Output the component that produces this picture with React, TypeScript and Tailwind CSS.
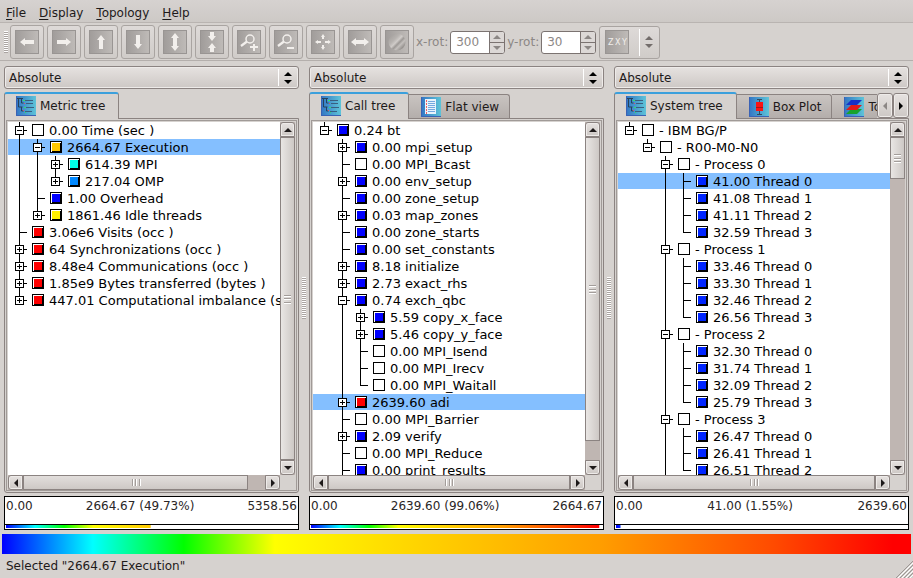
import type { ReactNode } from "react"

type Guide = "line" | "none" | "plus" | "minus" | "branch"

interface TreeNode {
  label: string
  color?: string
  closed?: boolean
  selected?: boolean
  // more siblings follow below the visible part of the list
  continues?: boolean
  children?: TreeNode[]
}

interface PanelProps {
  id: string
  name: string
  tabs: ReactNode
  tree: TreeNode[]
  hThumb: ReactNode
  vThumb: ReactNode
  min: string
  value: string
  max: string
  percent: number
}

const BLUE = "#0000ff"
const THREAD = "#0025ff"
const RED = "#ff0000"

const metricTree: TreeNode[] = [
  {
    label: "0.00 Time (sec )",
    children: [
      {
        label: "2664.67 Execution",
        color: "#ffc800",
        selected: true,
        children: [
          { label: "614.39 MPI", color: "#00ffe6", closed: true },
          { label: "217.04 OMP", color: "#0088ff", closed: true },
        ],
      },
      { label: "1.00 Overhead", color: BLUE },
      { label: "1861.46 Idle threads", color: "#fff000", closed: true },
    ],
  },
  { label: "3.06e6 Visits (occ )", color: RED },
  { label: "64 Synchronizations (occ )", color: RED, closed: true },
  { label: "8.48e4 Communications (occ )", color: RED, closed: true },
  { label: "1.85e9 Bytes transferred (bytes )", color: RED, closed: true },
  { label: "447.01 Computational imbalance (sec )", color: RED, closed: true },
]

const callTree: TreeNode[] = [
  {
    label: "0.24 bt",
    color: BLUE,
    children: [
      { label: "0.00 mpi_setup", color: BLUE, closed: true },
      { label: "0.00 MPI_Bcast" },
      { label: "0.00 env_setup", color: BLUE, closed: true },
      { label: "0.00 zone_setup", color: BLUE },
      { label: "0.03 map_zones", color: BLUE, closed: true },
      { label: "0.00 zone_starts", color: BLUE },
      { label: "0.00 set_constants", color: BLUE },
      { label: "8.18 initialize", color: BLUE, closed: true },
      { label: "2.73 exact_rhs", color: BLUE, closed: true },
      {
        label: "0.74 exch_qbc",
        color: BLUE,
        children: [
          { label: "5.59 copy_x_face", color: BLUE, closed: true },
          { label: "5.46 copy_y_face", color: BLUE, closed: true },
          { label: "0.00 MPI_Isend" },
          { label: "0.00 MPI_Irecv" },
          { label: "0.00 MPI_Waitall" },
        ],
      },
      { label: "2639.60 adi", color: RED, closed: true, selected: true },
      { label: "0.00 MPI_Barrier" },
      { label: "2.09 verify", color: BLUE, closed: true },
      { label: "0.00 MPI_Reduce" },
      { label: "0.00 print_results", color: BLUE, continues: true },
    ],
  },
]

const threads = (values: string[], selected = -1): TreeNode[] =>
  values.map((v, i) => ({ label: `${v} Thread ${i}`, color: THREAD, selected: i === selected }))

const systemTree: TreeNode[] = [
  {
    label: "- IBM BG/P",
    children: [
      {
        label: "- R00-M0-N0",
        children: [
          { label: "- Process 0", children: threads(["41.00", "41.08", "41.11", "32.59"], 0) },
          { label: "- Process 1", children: threads(["33.46", "33.30", "32.46", "26.56"]) },
          { label: "- Process 2", children: threads(["32.30", "31.74", "32.09", "25.79"]) },
          { label: "- Process 3", continues: true, children: threads(["26.47", "26.41", "26.51"]) },
        ],
      },
    ],
  },
]

const raised = "border border-[#8b8381] bg-linear-to-b from-[#e6e2e0] to-[#cdc8c5] shadow-[inset_0_0_0_1px_#eeebe9]"
const spectrum =
  "bg-[linear-gradient(to_right,#00f,#0ff_10%,#0f0_20%,#ff0_30%,#ffc800_50%,#ff9d00_66%,#ff4a00_85%,#f00_98%)]"

function GuideCell({ kind, down }: { kind: Guide; down: boolean }) {
  const box = kind === "plus" || kind === "minus"
  return (
    <svg width="18" height="17" className="shrink-0" shapeRendering="crispEdges">
      {kind !== "none" && <rect x="9" y="0" width="1" height={down ? 17 : 9} />}
      {(kind === "branch" || box) && <rect x="9" y="8" width="8" height="1" />}
      {box && (
        <>
          <rect x="5" y="4" width="9" height="9" />
          <rect x="6" y="5" width="7" height="7" fill="#fff" />
          <rect x="7" y="8" width="5" height="1" />
        </>
      )}
      {kind === "plus" && <rect x="9" y="6" width="1" height="5" />}
    </svg>
  )
}

function Swatch({ color }: { color?: string }) {
  return (
    <svg width="12" height="12" className="mx-1 mt-[2px] shrink-0" shapeRendering="crispEdges">
      <rect width="12" height="12" />
      <rect x="1" y="1" width="10" height="10" fill="#fff" />
      {color && (
        <>
          <path d="M10 2h1v9H2v-1h8z" />
          <rect x="2" y="2" width="8" height="8" fill={color} />
        </>
      )}
    </svg>
  )
}

function TreeRows({ nodes, trail = [] }: { nodes: TreeNode[]; trail?: boolean[] }) {
  return (
    <ul role={trail.length ? "group" : "tree"}>
      {nodes.map((node, i) => {
        const more = i < nodes.length - 1 || !!node.continues
        const kind: Guide = node.children ? "minus" : node.closed ? "plus" : "branch"
        return (
          <li key={node.label} role="treeitem" aria-selected={!!node.selected}>
            <div
              className={`flex h-[17px] border-b border-transparent bg-clip-padding pl-[2px] ${
                node.selected ? "bg-[#84bfff]" : ""
              }`}
            >
              {trail.map((line, t) => (
                <GuideCell key={t} kind={line ? "line" : "none"} down />
              ))}
              <GuideCell kind={kind} down={more} />
              <Swatch color={node.color} />
              <span className="pl-px text-[13px] leading-[18px] whitespace-pre text-black">{node.label}</span>
            </div>
            {node.children && <TreeRows nodes={node.children} trail={[...trail, more]} />}
          </li>
        )
      })}
    </ul>
  )
}

function Arrow({ dir }: { dir: "up" | "down" | "left" | "right" }) {
  const paths = {
    up: "M4 2 8 6H0z",
    down: "M0 2h8L4 6z",
    left: "M6 0v8L2 4z",
    right: "M2 0v8l4-4z",
  }
  return (
    <svg width="8" height="8" viewBox="0 0 8 8" fill="currentColor" className="shrink-0">
      <path d={paths[dir]} />
    </svg>
  )
}

function TreeIcon() {
  return (
    <svg width="20" height="20" viewBox="0 0 20 20" className="shrink-0">
      <defs>
        <linearGradient id="tabBlue" x1="0" x2="1">
          <stop offset="0" stopColor="#3275c4" />
          <stop offset="1" stopColor="#5ec4d8" />
        </linearGradient>
      </defs>
      <rect width="20" height="20" fill="url(#tabBlue)" />
      <path d="M.5 0v19.5H20" fill="none" stroke="#3b62b4" />
      <path d="M1 2.5h6M2.500 3v8h4M5.500 3v4h2M5.500 11v4h2" fill="none" stroke="#27425c" />
      <path d="M9 4.500h8M10 7.500h7M9 11.500h9M9 15.500h7" fill="none" stroke="#3a5f80" />
      <path d="M7 4h2v1H7zM8 11h2v1H8zM9 16h1v1H9z" fill="#2fe070" />
      <path d="M8 7h1v1H8zM7 14h1v1H7z" fill="#e04c64" />
    </svg>
  )
}

function FlatIcon() {
  return (
    <svg width="20" height="20" viewBox="0 0 20 20" className="shrink-0">
      <rect width="20" height="20" fill="url(#tabBlue)" />
      <path d="M.5 0v19.5H20" fill="none" stroke="#3b62b4" />
      <rect x="4" y="2" width="11" height="15" fill="#e8f3fc" />
      <path d="M7 4.500h7M7 6.500h7M7 8.500h7M7 10.500h7M7 12.500h7M7 14.500h7" stroke="#75a8df" />
      <path d="M5.500 3v14" stroke="#ee5d62" strokeDasharray="2 1" />
    </svg>
  )
}

function BoxPlotIcon() {
  return (
    <svg width="20" height="20" viewBox="0 0 20 20" className="shrink-0">
      <rect width="20" height="20" fill="url(#tabBlue)" />
      <path d="M.5 0v19.5H20" fill="none" stroke="#3b62b4" />
      <path d="M8 2.500h5M10.500 2v16M8 17.500h5" fill="none" stroke="#334a5c" />
      <rect x="7" y="5" width="7" height="9" fill="#fa1414" />
      <path d="M7 10.500h7" stroke="#a01818" />
    </svg>
  )
}

function TopologyIcon() {
  return (
    <svg width="20" height="20" viewBox="0 0 20 20" className="shrink-0">
      <rect width="20" height="20" fill="url(#tabBlue)" />
      <path d="M.5 0v19.5H20" fill="none" stroke="#3b62b4" />
      <path d="M7 12h11l-5 5H2z" fill="#17a32c" />
      <path d="M7 8h11l-5 5H2z" fill="#e01a1a" />
      <path d="M7 3h11l-5 5H2z" fill="#1530c8" />
    </svg>
  )
}

const toolIcons: { name: string; art: ReactNode }[] = [
  { name: "Back", art: <path d="M5 12l5-4v2h9v4h-9v2z" /> },
  { name: "Forward", art: <path d="M19 12l-5-4v2H5v4h9v2z" /> },
  { name: "Up", art: <path d="M12 5l4 5h-2v9h-4v-9H8z" /> },
  { name: "Down", art: <path d="M12 19l4-5h-2V5h-4v9H8z" /> },
  { name: "Expand vertically", art: <path d="M12 3l4 5h-2v8h2l-4 5-4-5h2V8H8z" /> },
  { name: "Collapse vertically", art: <path d="M10 2h4v4h2l-4 5-4-5h2zM10 22h4v-4h2l-4-5-4 5h2z" /> },
  {
    name: "Zoom in",
    art: (
      <>
        <circle cx="13" cy="9" r="4" fill="none" stroke="#f2efec" strokeWidth="1.500" />
        <path d="M10 11.500l-6 4.500" stroke="#f2efec" strokeWidth="2.200" />
        <path d="M16 14h2v2h3v2h-3v3h-2v-3h-3v-2h3z" />
      </>
    ),
  },
  {
    name: "Zoom out",
    art: (
      <>
        <circle cx="13" cy="9" r="4" fill="none" stroke="#f2efec" strokeWidth="1.500" />
        <path d="M10 11.500l-6 4.500" stroke="#f2efec" strokeWidth="2.200" />
        <path d="M13 17h7v2h-7z" />
      </>
    ),
  },
  {
    name: "Fit",
    art: <path d="M12 4l2 3h-1v2h-2V7h-1zM12 20l2-3h-1v-2h-2v2h-1zM4 12l3-2v1h3v2H7v1zM20 12l-3-2v1h-3v2h3v1z" />,
  },
  { name: "Expand horizontally", art: <path d="M3 12l5-4v2h8V8l5 4-5 4v-2H8v2z" /> },
  { name: "Light", art: <circle cx="12" cy="12" r="8.500" fill="url(#ball)" /> },
]

function ToolFace({ children }: { children: ReactNode }) {
  return (
    <svg width="24" height="24" viewBox="0 0 24 24" fill="#f2efec" className="shrink-0">
      <defs>
        <linearGradient id="face" x1="0" x2="1" y1="0" y2="0">
          <stop offset="0" stopColor="#a09c9a" />
          <stop offset="1" stopColor="#bfbbb8" />
        </linearGradient>
        <linearGradient id="ball" x1="0" x2="1" y1="0" y2="1">
          <stop offset="0.150" stopColor="#a8a4a1" />
          <stop offset="0.350" stopColor="#b7b3b0" />
          <stop offset="0.480" stopColor="#d0ccc9" />
          <stop offset="0.580" stopColor="#9c9895" />
          <stop offset="0.680" stopColor="#c4c0bd" />
          <stop offset="0.850" stopColor="#8f8b88" />
        </linearGradient>
      </defs>
      <rect x=".5" y=".5" width="23" height="23" fill="url(#face)" stroke="#999593" />
      {children}
    </svg>
  )
}

function Spin({ label, value }: { label: string; value: string }) {
  return (
    <div className="flex items-center text-[#8c8785]">
      <label htmlFor={label} className="px-[2px]">
        {label}:
      </label>
      <div className="flex h-[23px] w-[55px] overflow-hidden rounded-[3px] border border-[#7b7371] bg-white">
        <input id={label} defaultValue={value} className="w-0 flex-1 bg-transparent pl-[5px] outline-none" />
        <div className="flex w-[15px] flex-col border-l border-[#7b7371] bg-[#dcd8d6]">
          <button aria-label={`Increase ${label}`} className="flex flex-1 items-center justify-center border-b border-[#7b7371]">
            <Arrow dir="up" />
          </button>
          <button aria-label={`Decrease ${label}`} className="flex flex-1 items-center justify-center">
            <Arrow dir="down" />
          </button>
        </div>
      </div>
    </div>
  )
}

function Tab({ icon, label, active = false }: { icon: ReactNode; label: string; active?: boolean }) {
  return (
    <button
      role="tab"
      aria-selected={active}
      className={`flex shrink-0 items-center gap-1 whitespace-nowrap ${
        active
          ? "relative z-10 h-[27px] rounded-t-[3px] border-x border-t-2 border-x-[#8b8381] border-t-[#3ba0dc] bg-[#d6d2cf] pr-[13px] pb-[2px] pl-[11px]"
          : "mt-[2px] h-6 rounded-tr-[3px] border border-b-0 border-l-0 border-[#8b8381] bg-linear-to-b from-[#c9c4c1] to-[#b4aeab] pr-[10px] pl-3"
      }`}
    >
      {icon}
      {label}
    </button>
  )
}

function Grip({ vertical = false }: { vertical?: boolean }) {
  return vertical ? (
    <span className="flex h-2 w-[7px] flex-col justify-between">
      <i className="h-px bg-[#a39d9a] shadow-[0_1px_#fff]" />
      <i className="h-px bg-[#a39d9a] shadow-[0_1px_#fff]" />
      <i className="h-px bg-[#a39d9a] shadow-[0_1px_#fff]" />
    </span>
  ) : (
    <span className="flex h-[7px] w-2 justify-between">
      <i className="w-px bg-[#a39d9a] shadow-[1px_0_#fff]" />
      <i className="w-px bg-[#a39d9a] shadow-[1px_0_#fff]" />
      <i className="w-px bg-[#a39d9a] shadow-[1px_0_#fff]" />
    </span>
  )
}

function Panel({ id, name, tabs, tree, hThumb, vThumb, min, value, max, percent }: PanelProps) {
  return (
    <section className="flex min-h-0 min-w-0 flex-1 flex-col" aria-label={name}>
      <div className="relative">
        <select
          id={id}
          aria-label={`${name} value mode`}
          className={`h-[23px] w-full appearance-none rounded-[3px] pl-1 outline-none ${raised}`}
        >
          <option>Absolute</option>
        </select>
        <span className="pointer-events-none absolute inset-y-[3px] right-[7px] flex flex-col items-center justify-center border-l border-white pl-[5px] text-black">
          <Arrow dir="up" />
          <Arrow dir="down" />
        </span>
      </div>

      <div role="tablist" className="mt-[3px] flex h-[26px]">
        {tabs}
      </div>

      <div className="flex min-h-0 flex-1 flex-col rounded-b-[3px] border border-[#8b8381] p-px">
        <div className="flex min-h-0 flex-1 flex-col border border-[#a09a97] px-px pt-px">
          <div className="flex min-h-0 flex-1">
            <div className="min-w-0 flex-1 overflow-hidden bg-white">
              <TreeRows nodes={tree} />
            </div>
            <div className="flex w-[15px] flex-col bg-[#bfb6b2]">
              <button aria-label="Scroll up" className={`flex h-[15px] shrink-0 items-center justify-center rounded-t-[3px] ${raised}`}>
                <Arrow dir="up" />
              </button>
              {vThumb}
              <button aria-label="Scroll down" className={`flex h-[15px] shrink-0 items-center justify-center rounded-b-[3px] ${raised}`}>
                <Arrow dir="down" />
              </button>
            </div>
          </div>
          <div className="mr-[15px] flex h-[15px] bg-[#bfb6b2]">
            <button aria-label="Scroll left" className={`flex w-[15px] items-center justify-center rounded-l-[3px] ${raised}`}>
              <Arrow dir="left" />
            </button>
            {hThumb}
            <button aria-label="Scroll right" className={`flex w-[15px] items-center justify-center rounded-r-[3px] ${raised}`}>
              <Arrow dir="right" />
            </button>
          </div>
        </div>
      </div>

      <div className="mt-[3px] flex h-[34px] flex-col border border-black bg-white">
        <div className="flex flex-1 justify-between px-px pt-px leading-4 text-[#2a2626]">
          <span>{min}</span>
          <span>{value}</span>
          <span>{max}</span>
        </div>
        <div className="h-[5px] border-t border-black px-px pb-px">
          <div className={`h-full ${spectrum}`} style={{ clipPath: `inset(0 ${100 - percent}% 0 0)` }} />
        </div>
      </div>
    </section>
  )
}

function Splitter() {
  return (
    <div className="flex w-[10px] shrink-0 items-center justify-center">
      <span className="h-[42px] w-1 bg-[repeating-linear-gradient(to_bottom,#fff_0_1px,#aaa4a1_1px_2px)]" />
    </div>
  )
}

function VThumb({ className }: { className: string }) {
  return (
    <div className={`flex items-center justify-center border border-[#8b8381] bg-linear-to-r from-[#e9e6e4] to-[#cdc8c5] ${className}`}>
      <Grip vertical />
    </div>
  )
}

function HThumb({ className }: { className: string }) {
  return (
    <div className={`flex items-center justify-center border border-[#8b8381] bg-linear-to-b from-[#e2dedc] to-[#cdc8c5] ${className}`}>
      <Grip />
    </div>
  )
}

export default function App() {
  return (
    <main className="flex h-screen flex-col overflow-hidden bg-[#d6d2cf] font-['DejaVu_Sans',sans-serif] text-[12px] text-[#1e1a1a]">
      <nav className="flex h-[23px] shrink-0 items-center gap-[13px] border-b border-[#b9b4b1] bg-linear-to-b from-[#d6d2d0] to-[#cdc9c6] px-[6px] pt-[3px]">
        {["File", "Display", "Topology", "Help"].map((item) => (
          <button key={item}>
            <span className="underline underline-offset-2">{item[0]}</span>
            {item.slice(1)}
          </button>
        ))}
      </nav>

      <div className="flex h-[38px] shrink-0 items-center border-b border-[#b4afac] pt-px pl-1">
        <span className="mr-[2px] h-[22px] w-1 bg-[repeating-linear-gradient(to_bottom,#fff_0_1px,#aaa4a1_1px_2px)]" />
        <div className="flex gap-[3px]">
          {toolIcons.map(({ name, art }) => (
            <button
              key={name}
              aria-label={name}
              className="flex h-[34px] w-[34px] items-center justify-center rounded-[3px] border border-[#a9a4a1] bg-linear-to-b from-[#dedad8] to-[#d0ccc9]"
            >
              <ToolFace>{art}</ToolFace>
            </button>
          ))}
        </div>
        <Spin label="x-rot" value="300" />
        <Spin label="y-rot" value="30" />
        <button
          aria-label="Axis order"
          className="ml-[3px] flex h-[33px] w-[61px] items-center rounded-[3px] border border-[#a9a4a1] bg-linear-to-b from-[#dedad8] to-[#d0ccc9] pl-[5px] text-[#736d6b]"
        >
          <ToolFace>
            <g fontSize="8">
              <text x="3" y="15">Z</text>
              <text x="10" y="15">X</text>
              <text x="17" y="15">Y</text>
            </g>
          </ToolFace>
          <span className="ml-[10px] flex h-[27px] flex-col items-center justify-center border-l border-white pl-[5px]">
            <Arrow dir="up" />
            <Arrow dir="down" />
          </span>
        </button>
      </div>

      <div className="flex min-h-0 flex-1 px-1 pt-[5px]">
        <Panel
          id="metric-mode"
          name="Metric"
          tabs={<Tab active icon={<TreeIcon />} label="Metric tree" />}
          tree={metricTree}
          vThumb={<VThumb className="flex-1" />}
          hThumb={<HThumb className="mr-[17px] flex-1" />}
          min="0.00"
          value="2664.67 (49.73%)"
          max="5358.56"
          percent={49.73}
        />
        <Splitter />
        <Panel
          id="call-mode"
          name="Call"
          tabs={
            <>
              <Tab active icon={<TreeIcon />} label="Call tree" />
              <Tab icon={<FlatIcon />} label="Flat view" />
            </>
          }
          tree={callTree}
          vThumb={<VThumb className="mb-[19px] flex-1" />}
          hThumb={<HThumb className="flex-1" />}
          min="0.00"
          value="2639.60 (99.06%)"
          max="2664.67"
          percent={99.06}
        />
        <Splitter />
        <Panel
          id="system-mode"
          name="System"
          tabs={
            <>
              <Tab active icon={<TreeIcon />} label="System tree" />
              <div className="flex min-w-0 flex-1 overflow-hidden">
                <Tab icon={<BoxPlotIcon />} label="Box Plot" />
                <Tab icon={<TopologyIcon />} label="Topology" />
              </div>
              <button aria-label="Previous tabs" className={`mt-px flex w-4 items-center justify-center rounded-[3px] text-[#8c8785] ${raised}`}>
                <Arrow dir="left" />
              </button>
              <button aria-label="Next tabs" className={`mt-px flex w-4 items-center justify-center rounded-[3px] text-black ${raised}`}>
                <Arrow dir="right" />
              </button>
            </>
          }
          tree={systemTree}
          vThumb={<VThumb className="mb-auto h-[42px]" />}
          hThumb={<HThumb className="flex-1" />}
          min="0.00"
          value="41.00 (1.55%)"
          max="2639.60"
          percent={1.55}
        />
      </div>

      <div className={`mx-[2px] mt-1 h-5 shrink-0 ${spectrum}`} />
      <footer className="flex h-6 shrink-0 items-center justify-between pl-[6px]">
        <span>Selected "2664.67 Execution"</span>
        <svg width="17" height="17" viewBox="0 0 17 17" className="self-end" fill="none">
          <path d="M0 17 17 0M4 17 17 4M8 17l9-9M12 17l5-5" stroke="#9d9794" />
          <path d="M2 17 17 2M6 17 17 6M10 17l7-7M14 17l3-3" stroke="#fff" />
        </svg>
      </footer>
    </main>
  )
}
